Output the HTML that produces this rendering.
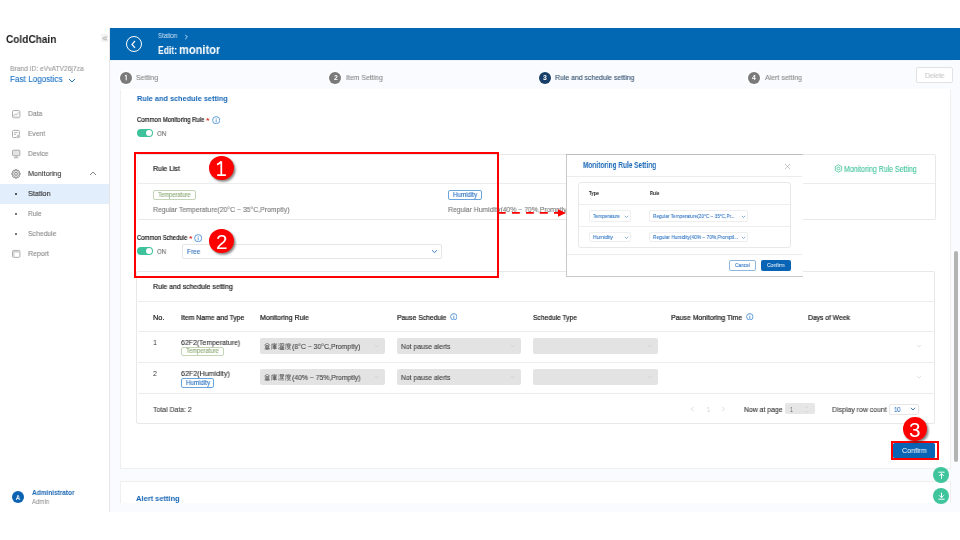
<!DOCTYPE html>
<html><head><meta charset="utf-8"><title>ColdChain - Edit monitor</title>
<style>
html,body{margin:0;padding:0;width:960px;height:540px;overflow:hidden;background:#fff;position:relative}
body>div,body>svg{position:absolute;box-sizing:border-box}
.t{white-space:nowrap;line-height:normal;font-family:"Liberation Sans",sans-serif;will-change:transform}
</style></head><body>
<div style="left:0.00px;top:28.00px;width:109.00px;height:484.00px;background:#fff"></div>
<div style="left:109.00px;top:28.00px;width:1.00px;height:484.00px;background:#e6e6e6"></div>
<div class="t" style="left:6.20px;top:33.24px;font-size:10.56px;font-weight:700;color:#222;transform:scaleX(0.956);transform-origin:0 0;">ColdChain</div>
<div style="left:100.80px;top:34.30px;width:7.60px;height:8.00px;background:#f3f3f3"></div>
<svg style="left:102px;top:36px" width="6" height="5" viewBox="0 0 6 5"><path d="M2.9 0.5 L1.1 2.4 L2.9 4.3 M5 0.5 L3.2 2.4 L5 4.3" fill="none" stroke="#8a8a8a" stroke-width="0.8"/></svg>
<div class="t" style="left:9.70px;top:63.53px;font-size:7.92px;font-weight:400;color:#9a9a9a;-webkit-text-stroke:0.12px #9a9a9a;transform:scaleX(0.844);transform-origin:0 0;">Brand ID: eVvATV26j7za</div>
<div class="t" style="left:9.70px;top:74.19px;font-size:9.07px;font-weight:400;color:#1f74c6;-webkit-text-stroke:0.12px #1f74c6;transform:scaleX(0.899);transform-origin:0 0;">Fast Logostics</div>
<svg style="left:68px;top:78px" width="8" height="5" viewBox="0 0 8 5"><path d="M1 1 L4 4 L7 1" fill="none" stroke="#1f74c6" stroke-width="1"/></svg>
<div style="left:0.00px;top:184.00px;width:109.00px;height:20.00px;background:#e2eefb"></div>
<div class="t" style="left:27.90px;top:108.89px;font-size:7.63px;font-weight:400;color:#8a8a8a;-webkit-text-stroke:0.12px #8a8a8a;transform:scaleX(0.893);transform-origin:0 0;">Data</div>
<div class="t" style="left:27.90px;top:128.69px;font-size:7.63px;font-weight:400;color:#8a8a8a;-webkit-text-stroke:0.12px #8a8a8a;transform:scaleX(0.871);transform-origin:0 0;">Event</div>
<div class="t" style="left:27.90px;top:148.79px;font-size:7.63px;font-weight:400;color:#8a8a8a;-webkit-text-stroke:0.12px #8a8a8a;transform:scaleX(0.879);transform-origin:0 0;">Device</div>
<div class="t" style="left:27.90px;top:168.69px;font-size:7.63px;font-weight:400;color:#3a3a3a;-webkit-text-stroke:0.12px #3a3a3a;transform:scaleX(0.940);transform-origin:0 0;">Monitoring</div>
<div class="t" style="left:27.90px;top:188.69px;font-size:7.63px;font-weight:400;color:#2a2a2a;-webkit-text-stroke:0.12px #2a2a2a;transform:scaleX(0.947);transform-origin:0 0;">Station</div>
<div class="t" style="left:27.90px;top:208.69px;font-size:7.63px;font-weight:400;color:#8a8a8a;-webkit-text-stroke:0.12px #8a8a8a;transform:scaleX(0.860);transform-origin:0 0;">Rule</div>
<div class="t" style="left:27.90px;top:228.69px;font-size:7.63px;font-weight:400;color:#8a8a8a;-webkit-text-stroke:0.12px #8a8a8a;transform:scaleX(0.895);transform-origin:0 0;">Schedule</div>
<div class="t" style="left:27.90px;top:248.89px;font-size:7.63px;font-weight:400;color:#8a8a8a;-webkit-text-stroke:0.12px #8a8a8a;transform:scaleX(0.917);transform-origin:0 0;">Report</div>
<div style="left:15.30px;top:192.80px;width:1.80px;height:1.80px;background:#555"></div>
<div style="left:15.30px;top:212.80px;width:1.80px;height:1.80px;background:#777"></div>
<div style="left:15.30px;top:232.80px;width:1.80px;height:1.80px;background:#777"></div>
<svg style="left:11px;top:108px" width="11" height="152" viewBox="0 0 11 152"><rect x="1.5" y="2.6" width="7.4" height="7.2" rx="1.2" fill="none" stroke="#a3a3a3" stroke-width="0.9"/><path d="M2.4 8.2 L4.2 6 L5.4 7 L7.9 4.3" fill="none" stroke="#a3a3a3" stroke-width="0.8"/><rect x="2" y="8.3" width="6.4" height="1.2" fill="#d4d4d4"/><rect x="1.5" y="22.4" width="6.9" height="7.2" rx="1.1" fill="none" stroke="#a3a3a3" stroke-width="0.9"/><path d="M3 24.6 H6.6 M3 26.4 H5" stroke="#a3a3a3" stroke-width="0.8"/><circle cx="7.4" cy="28.4" r="1.9" fill="#bdbdbd" stroke="#fff" stroke-width="0.5"/><rect x="1.5" y="42.2" width="7.4" height="5.6" rx="0.9" fill="#e4e4e4" stroke="#a3a3a3" stroke-width="0.9"/><path d="M5.2 47.8 V49.3 M3 49.8 H7.4" stroke="#a3a3a3" stroke-width="0.9"/><g transform="translate(5,65.9)"><path d="M-0.8 -4.2 H0.8 L1.1 -3 L2.2 -3.6 L3.4 -2.5 L2.8 -1.4 L4.1 -0.8 V0.8 L2.8 1.3 L3.4 2.5 L2.3 3.6 L1.2 3 L0.8 4.2 H-0.8 L-1.2 3 L-2.3 3.6 L-3.4 2.5 L-2.8 1.3 L-4.1 0.8 V-0.8 L-2.8 -1.4 L-3.4 -2.5 L-2.2 -3.6 L-1.1 -3 Z" fill="#dcdcdc" stroke="#777" stroke-width="0.9"/><circle r="1.4" fill="#fff" stroke="#777" stroke-width="0.8"/></g><rect x="1.5" y="142.4" width="7.4" height="6.9" rx="1.1" fill="none" stroke="#a3a3a3" stroke-width="0.9"/><rect x="2" y="142.8" width="6.4" height="1.8" fill="#d0d0d0"/><rect x="2" y="144.6" width="1.6" height="4.2" fill="#d8d8d8"/></svg>
<svg style="left:89px;top:171px" width="8" height="5" viewBox="0 0 8 5"><path d="M1 4 L4 1 L7 4" fill="none" stroke="#777" stroke-width="0.9"/></svg>
<div style="left:11.8px;top:491.3px;width:12.2px;height:12.2px;border-radius:50%;background:#0b63b1"></div>
<div class="t" style="left:16.10px;top:493.54px;font-size:6.91px;font-weight:400;color:#fff;-webkit-text-stroke:0.22px #fff;transform:scaleX(0.846);transform-origin:0 0;">A</div>
<div class="t" style="left:32.00px;top:488.89px;font-size:6.86px;font-weight:700;color:#1a66b3;transform:scaleX(0.945);transform-origin:0 0;">Administrator</div>
<div class="t" style="left:32.00px;top:498.31px;font-size:7.06px;font-weight:400;color:#9a9a9a;-webkit-text-stroke:0.12px #9a9a9a;transform:scaleX(0.860);transform-origin:0 0;">Admin</div>
<div style="left:110.00px;top:28.00px;width:850.00px;height:32.00px;background:#0368b4"></div>
<div style="left:125.7px;top:36px;width:16.4px;height:16.4px;border:1.4px solid #fff;border-radius:50%"></div>
<svg style="left:130px;top:40px" width="8" height="9" viewBox="0 0 8 9"><path d="M5 1 L2 4.4 L5 7.8" fill="none" stroke="#fff" stroke-width="1.2"/></svg>
<div class="t" style="left:157.90px;top:32.31px;font-size:7.06px;font-weight:400;color:#d5e4f5;transform:scaleX(0.874);transform-origin:0 0;">Station</div>
<svg style="left:183.5px;top:34px" width="5" height="6" viewBox="0 0 5 6"><path d="M1.2 0.8 L3.4 3 L1.2 5.2" fill="none" stroke="#d5e4f5" stroke-width="0.9"/></svg>
<div class="t" style="left:157.60px;top:44.64px;font-size:10.01px;font-weight:700;color:#fff;transform:scaleX(0.854);transform-origin:0 0;">Edit:</div>
<div class="t" style="left:178.90px;top:42.84px;font-size:12.00px;font-weight:700;color:#fff;transform:scaleX(0.922);transform-origin:0 0;">monitor</div>
<div style="left:110.00px;top:60.00px;width:850.00px;height:452.00px;background:#f9fbfe"></div>
<div style="left:110.00px;top:60.00px;width:842.00px;height:1.00px;background:#eef3f9"></div>
<div style="left:120.0px;top:71.8px;width:12px;height:12px;border-radius:50%;background:#7a7a7a;box-shadow:0 0 0 1.5px #fff"></div>
<svg style="left:123.00px;top:74px" width="6" height="8" viewBox="0 0 6 8"><path d="M3.2 1 V6.4 M3.2 1.1 L1.9 2.1" fill="none" stroke="#fff" stroke-width="1"/></svg>
<div class="t" style="left:135.90px;top:73.32px;font-size:7.49px;font-weight:400;color:#8a8a8a;-webkit-text-stroke:0.12px #8a8a8a;transform:scaleX(0.952);transform-origin:0 0;">Setting</div>
<div style="left:329.3px;top:71.8px;width:12px;height:12px;border-radius:50%;background:#7a7a7a;box-shadow:0 0 0 1.5px #fff"></div>
<div class="t" style="left:333.60px;top:73.99px;font-size:6.86px;font-weight:700;color:#fff;transform:scaleX(0.891);transform-origin:0 0;">2</div>
<div class="t" style="left:346.00px;top:73.32px;font-size:7.49px;font-weight:400;color:#8a8a8a;-webkit-text-stroke:0.12px #8a8a8a;transform:scaleX(0.923);transform-origin:0 0;">Item Setting</div>
<div style="left:538.9px;top:71.8px;width:12px;height:12px;border-radius:50%;background:#173f68;box-shadow:0 0 0 1.5px #fff"></div>
<div class="t" style="left:543.20px;top:73.99px;font-size:6.86px;font-weight:700;color:#fff;transform:scaleX(0.891);transform-origin:0 0;">3</div>
<div class="t" style="left:555.00px;top:73.32px;font-size:7.49px;font-weight:400;color:#34506f;-webkit-text-stroke:0.12px #34506f;transform:scaleX(0.921);transform-origin:0 0;">Rule and schedule setting</div>
<div style="left:748.0px;top:71.8px;width:12px;height:12px;border-radius:50%;background:#7a7a7a;box-shadow:0 0 0 1.5px #fff"></div>
<div class="t" style="left:752.30px;top:73.99px;font-size:6.86px;font-weight:700;color:#fff;transform:scaleX(0.891);transform-origin:0 0;">4</div>
<div class="t" style="left:764.50px;top:73.32px;font-size:7.49px;font-weight:400;color:#8a8a8a;-webkit-text-stroke:0.12px #8a8a8a;transform:scaleX(0.936);transform-origin:0 0;">Alert setting</div>
<div style="left:916.3px;top:67.4px;width:36.4px;height:16px;border:1px solid #e2e2e2;border-radius:2px;background:#fff"></div>
<div class="t" style="left:924.50px;top:71.94px;font-size:6.91px;font-weight:400;color:#c9c9c9;-webkit-text-stroke:0.12px #c9c9c9;transform:scaleX(0.976);transform-origin:0 0;">Delete</div>
<div style="left:120px;top:88.7px;width:831px;height:380.8px;background:#fff;border:1px solid #efefef;border-top-color:#fff"></div>
<div class="t" style="left:136.90px;top:94.32px;font-size:7.82px;font-weight:700;color:#1766b6;transform:scaleX(0.938);transform-origin:0 0;">Rule and schedule setting</div>
<div class="t" style="left:136.90px;top:116.14px;font-size:6.91px;font-weight:400;color:#222;-webkit-text-stroke:0.22px #222;transform:scaleX(0.861);transform-origin:0 0;">Common Monitoring Rule</div>
<div class="t" style="left:206.30px;top:117.29px;font-size:6.86px;font-weight:700;color:#e0302a;transform:scaleX(1.311);transform-origin:0 0;">*</div>
<svg style="left:211.80px;top:116.10px" width="8.40" height="8.40" viewBox="-4.2 -4.2 8.4 8.4"><circle cx="0" cy="0" r="3.6" fill="none" stroke="#3b86d0" stroke-width="0.8"/><path d="M0 -0.8 V2.2 M0 -2.2 V-1.5" stroke="#3b86d0" stroke-width="0.8"/></svg>
<div style="left:136.5px;top:129.3px;width:16.3px;height:8.1px;border-radius:4.1px;background:#3ec29b"></div>
<div style="left:145.90px;top:130.30px;width:6.1px;height:6.1px;border-radius:50%;background:#fff"></div>
<div class="t" style="left:156.60px;top:129.28px;font-size:7.20px;font-weight:400;color:#6e6e6e;-webkit-text-stroke:0.12px #6e6e6e;transform:scaleX(0.870);transform-origin:0 0;">ON</div>
<div style="left:137px;top:153.7px;width:798.8px;height:66.2px;background:#fff;border:1px solid #e8e8e8;border-left-color:#f7f7f7;border-radius:2px"></div>
<div class="t" style="left:152.80px;top:163.95px;font-size:7.35px;font-weight:400;color:#222;-webkit-text-stroke:0.22px #222;transform:scaleX(0.941);transform-origin:0 0;">Rule List</div>
<div style="left:138.00px;top:183.00px;width:797.00px;height:1.00px;background:#ececec"></div>
<svg style="left:834px;top:164.4px" width="9" height="9" viewBox="0 0 9 9"><circle cx="4.5" cy="4.5" r="1.4" fill="none" stroke="#45c49d" stroke-width="0.8"/><path d="M4.5 0.8 L7.7 2.6 V6.4 L4.5 8.2 L1.3 6.4 V2.6 Z" fill="none" stroke="#45c49d" stroke-width="0.8"/></svg>
<div class="t" style="left:844.40px;top:163.58px;font-size:8.64px;font-weight:400;color:#45c49d;-webkit-text-stroke:0.12px #45c49d;transform:scaleX(0.812);transform-origin:0 0;">Monitoring Rule Setting</div>
<div style="left:153.00px;top:189.50px;width:42.90px;height:10.20px;border:1px solid #c3d5b5;border-radius:2px;background:#fff"></div>
<div class="t" style="left:157.80px;top:190.67px;font-size:6.77px;font-weight:400;color:#8fab79;-webkit-text-stroke:0.12px #8fab79;transform:scaleX(0.859);transform-origin:0 0;">Temperature</div>
<div style="left:448.20px;top:189.90px;width:33.70px;height:9.70px;border:1px solid #69a5dc;border-radius:2px;background:#fff"></div>
<div class="t" style="left:453.05px;top:190.57px;font-size:6.77px;font-weight:400;color:#2a74c2;-webkit-text-stroke:0.12px #2a74c2;transform:scaleX(0.911);transform-origin:0 0;">Humidity</div>
<div class="t" style="left:152.90px;top:204.72px;font-size:7.49px;font-weight:400;color:#7a7a7a;-webkit-text-stroke:0.12px #7a7a7a;transform:scaleX(0.918);transform-origin:0 0;">Regular Temperature(20°C ~ 35°C,Promptly)</div>
<div class="t" style="left:448.20px;top:204.72px;font-size:7.49px;font-weight:400;color:#7a7a7a;-webkit-text-stroke:0.12px #7a7a7a;transform:scaleX(0.913);transform-origin:0 0;">Regular Humidity(40% ~ 70%,Promptly)</div>
<div class="t" style="left:136.70px;top:234.24px;font-size:6.91px;font-weight:400;color:#222;-webkit-text-stroke:0.22px #222;transform:scaleX(0.857);transform-origin:0 0;">Common Schedule</div>
<div class="t" style="left:188.90px;top:234.59px;font-size:6.86px;font-weight:700;color:#e0302a;transform:scaleX(1.311);transform-origin:0 0;">*</div>
<svg style="left:194.10px;top:234.00px" width="8.40" height="8.40" viewBox="-4.2 -4.2 8.4 8.4"><circle cx="0" cy="0" r="3.6" fill="none" stroke="#3b86d0" stroke-width="0.8"/><path d="M0 -0.8 V2.2 M0 -2.2 V-1.5" stroke="#3b86d0" stroke-width="0.8"/></svg>
<div style="left:136.5px;top:247.1px;width:16.3px;height:8.1px;border-radius:4.1px;background:#3ec29b"></div>
<div style="left:145.90px;top:248.10px;width:6.1px;height:6.1px;border-radius:50%;background:#fff"></div>
<div class="t" style="left:156.80px;top:246.98px;font-size:7.20px;font-weight:400;color:#6e6e6e;-webkit-text-stroke:0.12px #6e6e6e;transform:scaleX(0.852);transform-origin:0 0;">ON</div>
<div style="left:182.4px;top:243.5px;width:260px;height:15.8px;border:1px solid #e6e6e6;border-radius:2px;background:#fff"></div>
<div class="t" style="left:186.90px;top:246.78px;font-size:7.20px;font-weight:400;color:#2f6fb8;-webkit-text-stroke:0.12px #2f6fb8;transform:scaleX(0.898);transform-origin:0 0;">Free</div>
<svg style="left:431px;top:249px" width="7" height="5" viewBox="0 0 7 5"><path d="M1 1.2 L3.5 3.6 L6 1.2" fill="none" stroke="#2a6fbd" stroke-width="0.9"/></svg>
<div style="left:136.4px;top:271.3px;width:798.6px;height:153px;background:#fff;border:1px solid #e8e8e8;border-radius:2px"></div>
<div class="t" style="left:152.80px;top:282.18px;font-size:7.20px;font-weight:400;color:#2a2a2a;-webkit-text-stroke:0.22px #2a2a2a;transform:scaleX(0.965);transform-origin:0 0;">Rule and schedule setting</div>
<div style="left:138.00px;top:301.00px;width:797.00px;height:1.00px;background:#ececec"></div>
<div class="t" style="left:152.80px;top:313.18px;font-size:7.20px;font-weight:400;color:#222;-webkit-text-stroke:0.22px #222;transform:scaleX(1.026);transform-origin:0 0;">No.</div>
<div class="t" style="left:181.30px;top:313.18px;font-size:7.20px;font-weight:400;color:#222;-webkit-text-stroke:0.22px #222;transform:scaleX(0.952);transform-origin:0 0;">Item Name and Type</div>
<div class="t" style="left:259.70px;top:313.18px;font-size:7.20px;font-weight:400;color:#222;-webkit-text-stroke:0.22px #222;transform:scaleX(0.972);transform-origin:0 0;">Monitoring Rule</div>
<div class="t" style="left:396.60px;top:313.18px;font-size:7.20px;font-weight:400;color:#222;-webkit-text-stroke:0.22px #222;transform:scaleX(0.946);transform-origin:0 0;">Pause Schedule</div>
<div class="t" style="left:533.10px;top:313.18px;font-size:7.20px;font-weight:400;color:#222;-webkit-text-stroke:0.22px #222;transform:scaleX(0.926);transform-origin:0 0;">Schedule Type</div>
<div class="t" style="left:670.80px;top:313.18px;font-size:7.20px;font-weight:400;color:#222;-webkit-text-stroke:0.22px #222;transform:scaleX(0.968);transform-origin:0 0;">Pause Monitoring Time</div>
<div class="t" style="left:807.80px;top:313.18px;font-size:7.20px;font-weight:400;color:#222;-webkit-text-stroke:0.22px #222;transform:scaleX(0.941);transform-origin:0 0;">Days of Week</div>
<svg style="left:449.60px;top:312.80px" width="7.60" height="7.60" viewBox="-3.8000000000000003 -3.8000000000000003 7.6000000000000005 7.6000000000000005"><circle cx="0" cy="0" r="3.2" fill="none" stroke="#3b86d0" stroke-width="0.8"/><path d="M0 -0.8 V2.2 M0 -2.2 V-1.5" stroke="#3b86d0" stroke-width="0.8"/></svg>
<svg style="left:746.00px;top:312.80px" width="7.60" height="7.60" viewBox="-3.8000000000000003 -3.8000000000000003 7.6000000000000005 7.6000000000000005"><circle cx="0" cy="0" r="3.2" fill="none" stroke="#3b86d0" stroke-width="0.8"/><path d="M0 -0.8 V2.2 M0 -2.2 V-1.5" stroke="#3b86d0" stroke-width="0.8"/></svg>
<div style="left:138.00px;top:331.20px;width:797.00px;height:1.00px;background:#ececec"></div>
<div style="left:138.00px;top:362.30px;width:797.00px;height:1.00px;background:#ececec"></div>
<div style="left:138.00px;top:393.10px;width:797.00px;height:1.00px;background:#ececec"></div>
<div class="t" style="left:153.00px;top:338.09px;font-size:7.63px;font-weight:400;color:#333;transform:scaleX(0.895);transform-origin:0 0;">1</div>
<div class="t" style="left:181.20px;top:338.22px;font-size:7.49px;font-weight:400;color:#333;-webkit-text-stroke:0.12px #333;transform:scaleX(0.924);transform-origin:0 0;">62F2(Temperature)</div>
<div style="left:181.20px;top:346.80px;width:42.80px;height:9.70px;border:1px solid #c3d5b5;border-radius:2px;background:#fff"></div>
<div class="t" style="left:185.85px;top:347.47px;font-size:6.77px;font-weight:400;color:#8fab79;-webkit-text-stroke:0.12px #8fab79;transform:scaleX(0.864);transform-origin:0 0;">Temperature</div>
<div style="left:259.70px;top:338.10px;width:124.90px;height:15.70px;background:#e3e3e3;border-radius:2px"></div>
<svg style="left:373.60px;top:343.95px" width="6" height="4" viewBox="0 0 6 4"><path d="M1 1 L3 3 L5 1" fill="none" stroke="#cfcfcf" stroke-width="0.7"/></svg>
<div style="left:396.60px;top:338.10px;width:124.70px;height:15.70px;background:#e3e3e3;border-radius:2px"></div>
<svg style="left:510.30px;top:343.95px" width="6" height="4" viewBox="0 0 6 4"><path d="M1 1 L3 3 L5 1" fill="none" stroke="#cfcfcf" stroke-width="0.7"/></svg>
<div class="t" style="left:401.20px;top:341.77px;font-size:7.49px;font-weight:400;color:#444;-webkit-text-stroke:0.12px #444;transform:scaleX(0.908);transform-origin:0 0;">Not pause alerts</div>
<div style="left:533.10px;top:338.10px;width:125.00px;height:15.70px;background:#e3e3e3;border-radius:2px"></div>
<svg style="left:647.10px;top:343.95px" width="6" height="4" viewBox="0 0 6 4"><path d="M1 1 L3 3 L5 1" fill="none" stroke="#cfcfcf" stroke-width="0.7"/></svg>
<svg style="left:915.5px;top:343.95px" width="6" height="4" viewBox="0 0 6 4"><path d="M1 1 L3 3 L5 1" fill="none" stroke="#d6d6d6" stroke-width="0.7"/></svg>
<div class="t" style="left:153.00px;top:369.29px;font-size:7.63px;font-weight:400;color:#333;transform:scaleX(0.895);transform-origin:0 0;">2</div>
<div class="t" style="left:181.20px;top:369.42px;font-size:7.49px;font-weight:400;color:#333;-webkit-text-stroke:0.12px #333;transform:scaleX(0.951);transform-origin:0 0;">62F2(Humidity)</div>
<div style="left:181.20px;top:378.00px;width:33.20px;height:9.70px;border:1px solid #69a5dc;border-radius:2px;background:#fff"></div>
<div class="t" style="left:185.80px;top:378.67px;font-size:6.77px;font-weight:400;color:#2a74c2;-webkit-text-stroke:0.12px #2a74c2;transform:scaleX(0.911);transform-origin:0 0;">Humidity</div>
<div style="left:259.70px;top:369.30px;width:124.90px;height:15.70px;background:#e3e3e3;border-radius:2px"></div>
<svg style="left:373.60px;top:375.15px" width="6" height="4" viewBox="0 0 6 4"><path d="M1 1 L3 3 L5 1" fill="none" stroke="#cfcfcf" stroke-width="0.7"/></svg>
<div style="left:396.60px;top:369.30px;width:124.70px;height:15.70px;background:#e3e3e3;border-radius:2px"></div>
<svg style="left:510.30px;top:375.15px" width="6" height="4" viewBox="0 0 6 4"><path d="M1 1 L3 3 L5 1" fill="none" stroke="#cfcfcf" stroke-width="0.7"/></svg>
<div class="t" style="left:401.20px;top:372.97px;font-size:7.49px;font-weight:400;color:#444;-webkit-text-stroke:0.12px #444;transform:scaleX(0.908);transform-origin:0 0;">Not pause alerts</div>
<div style="left:533.10px;top:369.30px;width:125.00px;height:15.70px;background:#e3e3e3;border-radius:2px"></div>
<svg style="left:647.10px;top:375.15px" width="6" height="4" viewBox="0 0 6 4"><path d="M1 1 L3 3 L5 1" fill="none" stroke="#cfcfcf" stroke-width="0.7"/></svg>
<svg style="left:915.5px;top:375.15px" width="6" height="4" viewBox="0 0 6 4"><path d="M1 1 L3 3 L5 1" fill="none" stroke="#d6d6d6" stroke-width="0.7"/></svg>
<svg style="left:264.30px;top:342.70px" width="6.6" height="7" viewBox="0 0 6.6 7"><path d="M0.3 2.3 L3.2 0.2 L6.1 2.3 M1.6 2.5 H4.8 M1.6 3.2 H4.9 V4.2 H1.6 Z M1.2 6.6 V4.9 H5.2 V6.6 M2.1 5.5 H4.4 V6.4 H2.1 Z" fill="none" stroke="#4a4a4a" stroke-width="0.6"/></svg><svg style="left:271.25px;top:342.70px" width="6.6" height="7" viewBox="0 0 6.6 7"><path d="M3.3 0 V0.8 M0.7 1.1 H6.1 M0.9 1.1 V4 Q0.8 5.8 0.1 6.6 M1.9 2 H5.5 M2.3 2.8 H5.1 V4.6 H2.3 Z M2.3 3.7 H5.1 M1.6 5.5 H5.9 M3.7 1.6 V6.6" fill="none" stroke="#4a4a4a" stroke-width="0.6"/></svg><svg style="left:278.20px;top:342.70px" width="6.6" height="7" viewBox="0 0 6.6 7"><path d="M0.4 0.7 L1.1 1.3 M0.2 2.5 L0.9 3.1 M0.3 6.3 L1.3 4.3 M2.1 0.4 H5.8 V3.2 H2.1 Z M3.9 0.9 L3 2.6 M3.9 1.5 L4.8 2.6 M2.2 4 H5.7 V6.1 H2.2 Z M3.3 4 V6.1 M4.5 4 V6.1 M1.6 6.4 H6.2" fill="none" stroke="#4a4a4a" stroke-width="0.6"/></svg><svg style="left:285.15px;top:342.70px" width="6.6" height="7" viewBox="0 0 6.6 7"><path d="M3.4 0 V0.8 M0.7 1.1 H6.1 M0.9 1.1 V4 Q0.8 5.8 0.1 6.6 M1.7 2.1 H5.8 M2.6 1.5 V3.3 H4.9 V1.5 M2 4.1 H5.2 Q4.3 5.8 1.8 6.6 M2.7 4.7 Q3.8 6 5.9 6.5" fill="none" stroke="#4a4a4a" stroke-width="0.6"/></svg>
<div class="t" style="left:292.00px;top:341.82px;font-size:7.49px;font-weight:400;color:#444;-webkit-text-stroke:0.12px #444;transform:scaleX(0.917);transform-origin:0 0;">(8°C ~ 30°C,Promptly)</div>
<svg style="left:264.30px;top:373.90px" width="6.6" height="7" viewBox="0 0 6.6 7"><path d="M0.3 2.3 L3.2 0.2 L6.1 2.3 M1.6 2.5 H4.8 M1.6 3.2 H4.9 V4.2 H1.6 Z M1.2 6.6 V4.9 H5.2 V6.6 M2.1 5.5 H4.4 V6.4 H2.1 Z" fill="none" stroke="#4a4a4a" stroke-width="0.6"/></svg><svg style="left:271.25px;top:373.90px" width="6.6" height="7" viewBox="0 0 6.6 7"><path d="M3.3 0 V0.8 M0.7 1.1 H6.1 M0.9 1.1 V4 Q0.8 5.8 0.1 6.6 M1.9 2 H5.5 M2.3 2.8 H5.1 V4.6 H2.3 Z M2.3 3.7 H5.1 M1.6 5.5 H5.9 M3.7 1.6 V6.6" fill="none" stroke="#4a4a4a" stroke-width="0.6"/></svg><svg style="left:278.20px;top:373.90px" width="6.6" height="7" viewBox="0 0 6.6 7"><path d="M0.4 0.7 L1.1 1.3 M0.2 2.5 L0.9 3.1 M0.3 6.3 L1.3 4.3 M2.1 0.4 H5.6 V2.2 H2.1 Z M2.1 1.3 H5.6 M2.4 2.6 L2.9 3.6 M5.2 2.6 L4.7 3.6 M3.1 2.5 V4.8 M4.5 2.5 V4.8 M1.8 4.8 H5.9 M2.1 5.6 L1.8 6.5 M3.2 5.6 V6.5 M4.3 5.6 L4.5 6.5 M5.4 5.6 L5.9 6.5" fill="none" stroke="#4a4a4a" stroke-width="0.6"/></svg><svg style="left:285.15px;top:373.90px" width="6.6" height="7" viewBox="0 0 6.6 7"><path d="M3.4 0 V0.8 M0.7 1.1 H6.1 M0.9 1.1 V4 Q0.8 5.8 0.1 6.6 M1.7 2.1 H5.8 M2.6 1.5 V3.3 H4.9 V1.5 M2 4.1 H5.2 Q4.3 5.8 1.8 6.6 M2.7 4.7 Q3.8 6 5.9 6.5" fill="none" stroke="#4a4a4a" stroke-width="0.6"/></svg>
<div class="t" style="left:292.00px;top:373.02px;font-size:7.49px;font-weight:400;color:#444;-webkit-text-stroke:0.12px #444;transform:scaleX(0.912);transform-origin:0 0;">(40% ~ 75%,Promptly)</div>
<div class="t" style="left:153.00px;top:405.02px;font-size:7.49px;font-weight:400;color:#444;-webkit-text-stroke:0.12px #444;transform:scaleX(0.921);transform-origin:0 0;">Total Data: 2</div>
<svg style="left:690px;top:406px" width="5" height="6" viewBox="0 0 5 6"><path d="M3.4 0.8 L1.4 3 L3.4 5.2" fill="none" stroke="#cfcfcf" stroke-width="0.7"/></svg>
<div class="t" style="left:706.50px;top:404.98px;font-size:7.20px;font-weight:400;color:#c8c8c8;transform:scaleX(0.749);transform-origin:0 0;">1</div>
<svg style="left:721px;top:406px" width="5" height="6" viewBox="0 0 5 6"><path d="M1.4 0.8 L3.4 3 L1.4 5.2" fill="none" stroke="#cfcfcf" stroke-width="0.7"/></svg>
<div class="t" style="left:743.50px;top:404.59px;font-size:7.63px;font-weight:400;color:#333;-webkit-text-stroke:0.12px #333;transform:scaleX(0.903);transform-origin:0 0;">Now at page</div>
<div style="left:784.7px;top:403.2px;width:30.5px;height:11.2px;background:#e6e6e6;border-radius:2px"></div>
<div class="t" style="left:789.90px;top:404.68px;font-size:7.20px;font-weight:400;color:#555;transform:scaleX(0.699);transform-origin:0 0;">1</div>
<svg style="left:804px;top:404.5px" width="5" height="9" viewBox="0 0 5 9"><path d="M1 3 L2.5 1.5 L4 3 M1 6 L2.5 7.5 L4 6" fill="none" stroke="#cfcfcf" stroke-width="0.6"/></svg>
<div class="t" style="left:831.90px;top:404.59px;font-size:7.63px;font-weight:400;color:#444;-webkit-text-stroke:0.12px #444;transform:scaleX(0.910);transform-origin:0 0;">Display row count</div>
<div style="left:889.4px;top:403.5px;width:29.2px;height:11px;border:1px solid #e6e6e6;border-radius:2px;background:#fff"></div>
<div class="t" style="left:893.80px;top:404.98px;font-size:7.20px;font-weight:400;color:#2a6fbd;-webkit-text-stroke:0.12px #2a6fbd;transform:scaleX(0.799);transform-origin:0 0;">10</div>
<svg style="left:910.3px;top:407px" width="6" height="4" viewBox="0 0 6 4"><path d="M0.8 0.8 L3 3 L5.2 0.8" fill="none" stroke="#2a6fbd" stroke-width="0.9"/></svg>
<div style="left:893.2px;top:443.1px;width:42px;height:14.6px;background:#0a64b5;border-radius:1.5px"></div>
<div class="t" style="left:902.20px;top:445.58px;font-size:7.20px;font-weight:400;color:#fff;transform:scaleX(0.976);transform-origin:0 0;">Confirm</div>
<div style="left:891px;top:441.1px;width:48px;height:18.8px;border:2px solid #fe0000"></div>
<div style="left:120px;top:481.4px;width:831px;height:40px;background:#fff;border:1px solid #efefef"></div>
<div class="t" style="left:136.30px;top:494.35px;font-size:7.68px;font-weight:700;color:#1766b6;transform:scaleX(0.975);transform-origin:0 0;">Alert setting</div>
<div style="left:110.00px;top:502.80px;width:850.00px;height:9.20px;background:#f9fbfe"></div>
<div style="left:110.00px;top:512.00px;width:850.00px;height:28.00px;background:#fff"></div>
<div style="left:933.45px;top:467.45px;width:16px;height:16px;border-radius:50%;background:#3fc49b"></div>
<div style="left:933.45px;top:488px;width:16px;height:16px;border-radius:50%;background:#3fc49b"></div>
<svg style="left:930px;top:464px" width="24" height="42" viewBox="930 464 24 42"><path d="M938.4 472.2 H944.6 M941.5 473.6 V478.8 M939.2 476 L941.5 473.6 L943.8 476" fill="none" stroke="#fff" stroke-width="0.95"/><path d="M938.4 499.2 H944.6 M941.5 492.6 V497.8 M939.2 495.3 L941.5 497.7 L943.8 495.3" fill="none" stroke="#fff" stroke-width="0.95"/></svg>
<div style="left:954px;top:250.5px;width:3.8px;height:211.5px;border-radius:2px;background:#b3b3b3"></div>
<div style="left:134px;top:152px;width:365px;height:126px;border:2px solid #fe0000"></div>
<div style="left:209.20px;top:155.70px;width:24.4px;height:24.2px;border-radius:50%;background:#fe0000;box-shadow:1.6px 1.8px 2.2px rgba(40,40,40,0.55)"></div>
<svg style="left:214px;top:159px" width="16" height="19" viewBox="214 159 16 19"><path d="M221.3 161.2 V175 M217.2 175.1 H225.9 M221.3 161.4 Q219.6 163.6 217.1 164.6" fill="none" stroke="#fff" stroke-width="1.75"/></svg>
<div style="left:209.20px;top:229.20px;width:24.4px;height:24.2px;border-radius:50%;background:#fe0000;box-shadow:1.6px 1.8px 2.2px rgba(40,40,40,0.55)"></div>
<div class="t" style="left:215.60px;top:229.95px;font-size:20.71px;font-weight:400;color:#fff;">2</div>
<div style="left:902.85px;top:417.00px;width:24.4px;height:24.2px;border-radius:50%;background:#fe0000;box-shadow:1.6px 1.8px 2.2px rgba(40,40,40,0.55)"></div>
<div class="t" style="left:909.10px;top:418.05px;font-size:20.71px;font-weight:400;color:#fff;">3</div>
<svg style="left:498px;top:208px" width="70" height="10" viewBox="498 208 70 10"><path d="M498 212.9 H505.7 M512 212.9 H519.8 M526 212.9 H533.8 M539.8 212.9 H547.8 M554 212.9 H559" stroke="#fe0000" stroke-width="1.9"/><path d="M558 209.2 L565.9 213 L558 216.8 Z" fill="#fe0000"/></svg>
<div style="left:566.2px;top:153.8px;width:236px;height:121.6px;background:#fff;border:1px solid #c9c9c9;border-right:none;box-sizing:content-box"></div>
<div style="left:566.20px;top:153.80px;width:235.80px;height:1.00px;background:#bdbdbd"></div>
<div class="t" style="left:583.00px;top:161.35px;font-size:8.23px;font-weight:700;color:#1766b6;transform:scaleX(0.789);transform-origin:0 0;">Monitoring Rule Setting</div>
<svg style="left:783.5px;top:163px" width="7" height="7" viewBox="0 0 7 7"><path d="M1 1 L6 6 M6 1 L1 6" stroke="#b0b0b0" stroke-width="0.7"/></svg>
<div style="left:567.00px;top:175.60px;width:235.00px;height:0.80px;background:#ececec"></div>
<div style="left:577.5px;top:182.3px;width:213px;height:66px;border:1px solid #e8e8e8;border-radius:3px;background:#fff"></div>
<div class="t" style="left:589.40px;top:190.06px;font-size:5.35px;font-weight:700;color:#222;transform:scaleX(0.833);transform-origin:0 0;">Type</div>
<div class="t" style="left:649.60px;top:190.06px;font-size:5.35px;font-weight:700;color:#222;transform:scaleX(0.811);transform-origin:0 0;">Rule</div>
<div style="left:578.50px;top:204.20px;width:211.50px;height:0.80px;background:#eeeeee"></div>
<div style="left:578.50px;top:225.70px;width:211.50px;height:0.80px;background:#eeeeee"></div>
<div style="left:589.20px;top:210.00px;width:42.20px;height:11.50px;border:1px solid #eeeeee;border-radius:2px;background:#fff"></div>
<div class="t" style="left:592.50px;top:212.14px;font-size:6.19px;font-weight:400;color:#3a7cc6;-webkit-text-stroke:0.12px #3a7cc6;transform:scaleX(0.773);transform-origin:0 0;">Temperature</div>
<svg style="left:623.90px;top:214.55px" width="5" height="3.5" viewBox="0 0 5 3.5"><path d="M0.8 0.8 L2.5 2.5 L4.2 0.8" fill="none" stroke="#3a7cc6" stroke-width="0.6"/></svg>
<div style="left:649.40px;top:210.00px;width:98.70px;height:11.50px;border:1px solid #eeeeee;border-radius:2px;background:#fff"></div>
<div class="t" style="left:652.70px;top:212.14px;font-size:6.19px;font-weight:400;color:#3a7cc6;-webkit-text-stroke:0.12px #3a7cc6;transform:scaleX(0.761);transform-origin:0 0;">Regular Temperature(20°C ~ 35°C,Pr...</div>
<svg style="left:740.60px;top:214.55px" width="5" height="3.5" viewBox="0 0 5 3.5"><path d="M0.8 0.8 L2.5 2.5 L4.2 0.8" fill="none" stroke="#3a7cc6" stroke-width="0.6"/></svg>
<div style="left:589.20px;top:231.60px;width:42.20px;height:10.90px;border:1px solid #eeeeee;border-radius:2px;background:#fff"></div>
<div class="t" style="left:592.50px;top:233.44px;font-size:6.19px;font-weight:400;color:#3a7cc6;-webkit-text-stroke:0.12px #3a7cc6;transform:scaleX(0.826);transform-origin:0 0;">Humidity</div>
<svg style="left:623.90px;top:235.85px" width="5" height="3.5" viewBox="0 0 5 3.5"><path d="M0.8 0.8 L2.5 2.5 L4.2 0.8" fill="none" stroke="#3a7cc6" stroke-width="0.6"/></svg>
<div style="left:649.40px;top:231.60px;width:98.70px;height:10.90px;border:1px solid #eeeeee;border-radius:2px;background:#fff"></div>
<div class="t" style="left:652.70px;top:233.44px;font-size:6.19px;font-weight:400;color:#3a7cc6;-webkit-text-stroke:0.12px #3a7cc6;transform:scaleX(0.777);transform-origin:0 0;">Regular Humidity(40% ~ 70%,Promptl...</div>
<svg style="left:740.60px;top:235.85px" width="5" height="3.5" viewBox="0 0 5 3.5"><path d="M0.8 0.8 L2.5 2.5 L4.2 0.8" fill="none" stroke="#3a7cc6" stroke-width="0.6"/></svg>
<div style="left:567.00px;top:253.50px;width:235.00px;height:0.80px;background:#ececec"></div>
<div style="left:728.7px;top:259.8px;width:27.1px;height:11.7px;border:1px solid #8db6df;border-radius:2px;background:#fff"></div>
<div class="t" style="left:734.80px;top:262.26px;font-size:5.91px;font-weight:400;color:#3a7cc6;-webkit-text-stroke:0.12px #3a7cc6;transform:scaleX(0.816);transform-origin:0 0;">Cancel</div>
<div style="left:761px;top:260px;width:29.7px;height:11px;border-radius:2px;background:#0a64b5"></div>
<div class="t" style="left:767.10px;top:262.26px;font-size:5.91px;font-weight:400;color:#fff;transform:scaleX(0.856);transform-origin:0 0;">Confirm</div>
</body></html>
